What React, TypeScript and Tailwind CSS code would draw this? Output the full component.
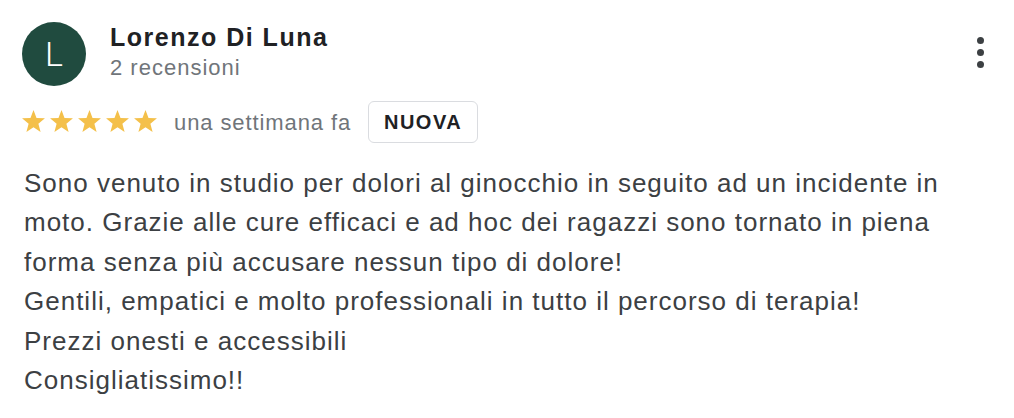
import React from "react";

const Star = () => (
  <svg width="25" height="24" viewBox="0 0 24 23" className="shrink-0">
    <path
      fill="#f4c04a"
      d="M12 0l2.9 7.6 8.1.4-6.3 5.1 2.1 7.9L12 16.5 5.2 21l2.1-7.9L1 8l8.1-.4z"
    />
  </svg>
);

export default function App() {
  return (
    <div
      className="w-[1014px] h-[418px] bg-white overflow-hidden"
      style={{ fontFamily: '"Liberation Sans", Arial, sans-serif' }}
    >
      <div className="flex items-start pl-[22px] pt-[22px] pr-[22px]">
        <div className="w-16 h-16 rounded-full bg-[#204b3f] flex items-center justify-center shrink-0">
          <span className="text-white text-[34px] leading-none font-light" style={{ fontFamily: 'Roboto, sans-serif' }}>L</span>
        </div>
        <div className="ml-6 flex-1">
          <div className="text-[25px] leading-[30px] font-bold text-[#202124] tracking-[1.5px]">Lorenzo Di Luna</div>
          <div className="text-[22px] leading-[26px] text-[#70757a] mt-[3px] tracking-[1px]">2 recensioni</div>
        </div>
        <div className="flex flex-col items-center gap-[5px] mt-[15px] mr-[8px]">
          <span className="w-[7px] h-[7px] rounded-full bg-[#3c4043]" />
          <span className="w-[7px] h-[7px] rounded-full bg-[#3c4043]" />
          <span className="w-[7px] h-[7px] rounded-full bg-[#3c4043]" />
        </div>
      </div>
      <div className="flex items-center pl-[21px] mt-[15px]">
        <div className="flex gap-[3px] pb-[1px]">
          <Star />
          <Star />
          <Star />
          <Star />
          <Star />
        </div>
        <span className="ml-[16px] text-[22px] text-[#70757a] tracking-[0.9px]">una settimana fa</span>
        <span className="ml-[17px] border-[1.5px] border-[#dadce0] rounded-[6px] h-[42px] w-[110px] flex items-center justify-center text-[20px] font-bold text-[#202124] tracking-[1.5px]">
          NUOVA
        </span>
      </div>
      <div className="pl-[24px] pr-[10px] mt-[21px] text-[26px] leading-[39.4px] text-[#3c4043] tracking-[1px]">
        <div className="whitespace-nowrap">Sono venuto in studio per dolori al ginocchio in seguito ad un incidente in</div>
        <div className="whitespace-nowrap">moto. Grazie alle cure efficaci e ad hoc dei ragazzi sono tornato in piena</div>
        <div className="whitespace-nowrap">forma senza più accusare nessun tipo di dolore!</div>
        <div className="whitespace-nowrap">Gentili, empatici e molto professionali in tutto il percorso di terapia!</div>
        <div className="whitespace-nowrap">Prezzi onesti e accessibili</div>
        <div className="whitespace-nowrap">Consigliatissimo!!</div>
      </div>
    </div>
  );
}
